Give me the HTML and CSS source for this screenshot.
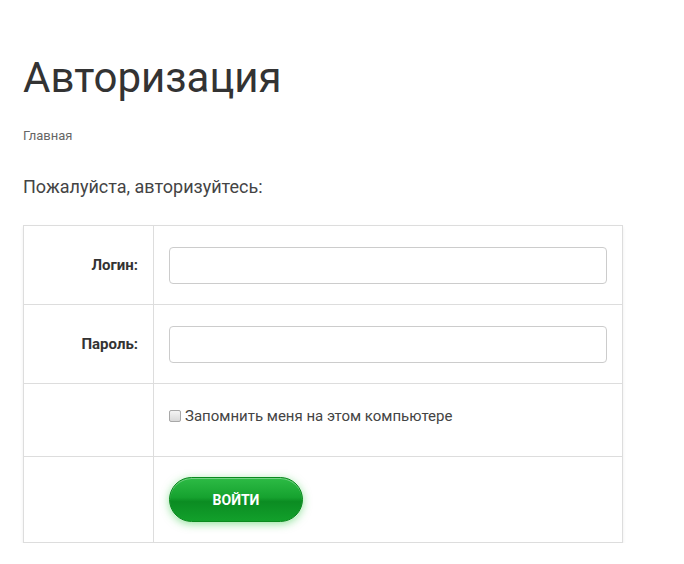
FILE: index.html
```html
<!DOCTYPE html>
<html lang="ru">
<head>
<meta charset="utf-8">
<title>Авторизация</title>
<link rel="stylesheet" href="styles.css">
</head>
<body>
<main class="page">
  <h1 class="title">Авторизация</h1>
  <nav class="crumbs"><a href="#">Главная</a></nav>
  <p class="lead">Пожалуйста, авторизуйтесь:</p>
  <form class="auth">
    <table class="auth-table">
      <tr>
        <th class="label">Логин:</th>
        <td class="field"><input class="input" type="text"></td>
      </tr>
      <tr>
        <th class="label">Пароль:</th>
        <td class="field"><input class="input" type="password"></td>
      </tr>
      <tr class="row-check">
        <th class="label"></th>
        <td class="field"><label class="remember"><input class="check" type="checkbox"><span>Запомнить меня на этом компьютере</span></label></td>
      </tr>
      <tr class="row-btn">
        <th class="label"></th>
        <td class="field"><button class="btn" type="button">ВОЙТИ</button></td>
      </tr>
    </table>
  </form>
</main>
</body>
</html>
```

FILE: styles.css
```css
html, body {
  margin: 0;
  padding: 0;
  background: #fff;
}
body {
  font-family: Roboto, "Noto Sans", Arial, sans-serif;
  color: #333;
}
.page {
  padding: 52px 0 0 23px;
  width: 600px;
}
.title {
  margin: 0;
  font-size: 42px;
  font-weight: 400;
  line-height: 52px;
  color: #333;
}
.crumbs {
  margin-top: 23px;
  font-size: 13px;
  line-height: 17px;
}
.crumbs a {
  color: #666;
  text-decoration: none;
}
.lead {
  margin: 31px 0 0;
  font-size: 18px;
  line-height: 24px;
  color: #444;
}
.auth {
  margin-top: 26px;
}
.auth-table {
  width: 600px;
  border-collapse: collapse;
  box-shadow: 0 2px 3px rgba(0,0,0,0.08);
}
.auth-table th,
.auth-table td {
  border: 1px solid #ddd;
}
.label {
  width: 114px;
  padding: 0 15px 0 0;
  text-align: right;
  font-size: 15px;
  font-weight: 700;
  color: #333;
  height: 78px;
}
.field {
  padding: 0 15px 0 15px;
  height: 78px;
}
.input {
  display: block;
  box-sizing: border-box;
  width: 438px;
  height: 37px;
  border: 1px solid #ccc;
  border-radius: 4px;
  background: #fff;
}
.row-check .label,
.row-check .field {
  height: 72px;
}
.row-btn .label,
.row-btn .field {
  height: 85px;
}
.remember {
  display: flex;
  align-items: center;
  margin-bottom: 8px;
  font-size: 15px;
  color: #444;
}
.check {
  appearance: none;
  -webkit-appearance: none;
  box-sizing: border-box;
  margin: 0 4px 0 0;
  width: 12px;
  height: 12px;
  border: 1px solid #a8a8a8;
  border-radius: 2px;
  background: linear-gradient(to bottom, #f4f4f4, #d9d9d9);
}
.btn {
  display: block;
  width: 134px;
  height: 45px;
  border: 1px solid #0b8a1f;
  border-radius: 23px;
  background: linear-gradient(to bottom, #2dbb45 0%, #16a22f 45%, #0b8c22 55%, #12a02b 100%);
  box-shadow: 0 2px 8px rgba(40, 200, 60, 0.5), inset 0 1px 0 rgba(255,255,255,0.35);
  color: #fff;
  font-family: Roboto, Arial, sans-serif;
  font-size: 14px;
  font-weight: 700;
  cursor: pointer;
}
```
